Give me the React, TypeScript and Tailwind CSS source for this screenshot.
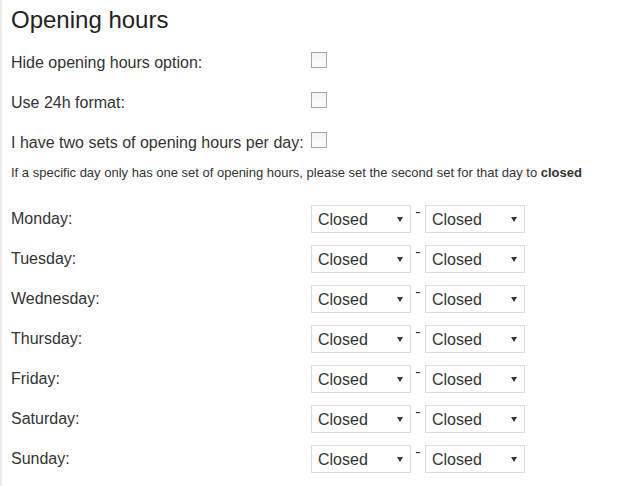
import React from "react";

const DAYS = ["Monday", "Tuesday", "Wednesday", "Thursday", "Friday", "Saturday", "Sunday"];

const OPTIONS = [
  { label: "Hide opening hours option:", rowClass: "h-[40px]" },
  { label: "Use 24h format:", rowClass: "h-[40px]" },
  { label: "I have two sets of opening hours per day:", rowClass: "h-[36px]" },
];

const selectClass =
  "h-[28px] w-[100px] appearance-none rounded-none border border-[#dcdcdc] bg-white pl-[6px] pr-[20px] pt-[1px] text-[16px] leading-[18px] text-[#333] outline-none";

function Checkbox() {
  return (
    <input
      type="checkbox"
      className="mt-[4px] h-[16px] w-[16px] appearance-none border border-[#a6a6a6] bg-gradient-to-b from-[#f3f3f3] to-white"
    />
  );
}

function TimeSelect() {
  return (
    <div className="relative">
      <select className={selectClass} defaultValue="closed">
        <option value="closed">Closed</option>
      </select>
      <svg
        className="pointer-events-none absolute right-[8px] top-[12px]"
        width="6"
        height="5"
        viewBox="0 0 6 5"
      >
        <path d="M0 0h6L3 5z" fill="#333" />
      </svg>
    </div>
  );
}

export default function App() {
  return (
    <div
      className="min-h-[486px] border-l-2 border-[#ececec] bg-white pl-[9px] text-[#333]"
      style={{ fontFamily: '"Liberation Sans", Arial, sans-serif' }}
    >
      <h1 className="mb-[14px] pt-[6px] text-[24px] leading-[28px] font-normal text-[#222]">
        Opening hours
      </h1>

      {OPTIONS.map((opt) => (
        <div key={opt.label} className={`flex items-start ${opt.rowClass}`}>
          <label className="w-[300px] pt-[6px] text-[16px] leading-[18px]">
            {opt.label}
          </label>
          <Checkbox />
        </div>
      ))}

      <p className="h-[41px] text-[13px] leading-[18px]">
        If a specific day only has one set of opening hours, please set the second set for
        that day to <b>closed</b>
      </p>

      {DAYS.map((day) => (
        <div key={day} className="flex h-[40px] items-start">
          <label className="w-[300px] pt-[5px] text-[16px] leading-[18px]">{day}:</label>
          <TimeSelect />
          <span className="-mt-[1px] w-[14px] text-center text-[16px] leading-none">-</span>
          <TimeSelect />
        </div>
      ))}
    </div>
  );
}
